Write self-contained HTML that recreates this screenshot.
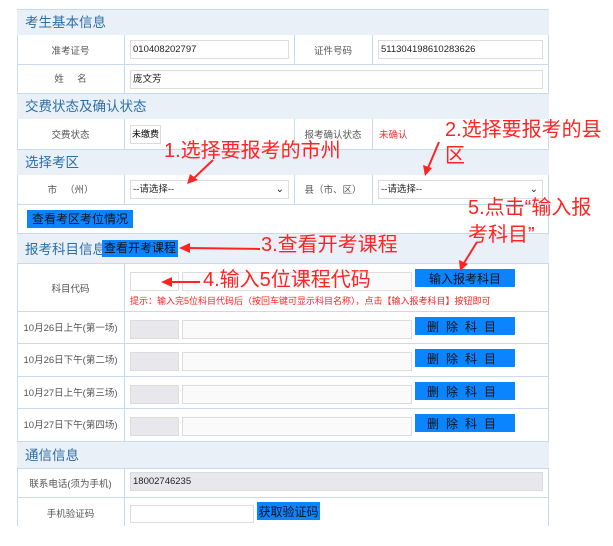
<!DOCTYPE html>
<html><head><meta charset="utf-8"><style>
*{margin:0;padding:0;box-sizing:border-box}
body{width:613px;height:546px;background:#fff;position:relative;overflow:hidden;font-family:"Liberation Sans","Noto Sans CJK SC",sans-serif}
.a{position:absolute}
.hd{position:absolute;left:17px;width:532px;background:#e9f0f8;border-top:1px solid #c9daee;color:#2d6ea6;font-size:13.5px;padding-left:8px}
.ln{position:absolute;background:#c9daee}
.lb{position:absolute;font-size:9.5px;color:#555;text-align:center;white-space:nowrap}
.in{position:absolute;border:1px solid #dcdcdc;background:#fff;font-size:9.5px;color:#222;padding-left:2px;white-space:nowrap;overflow:hidden}
.gr{background:#e8e8ec}
.bt{position:absolute;background:#0a84ff;color:#111;font-size:12px;text-align:center;white-space:nowrap}
.r{position:absolute;color:#ff2424;font-size:20px;white-space:nowrap;line-height:1}
</style></head><body>
<div class="ln" style="left:17px;top:9px;width:1px;height:517px"></div>
<div class="ln" style="left:548px;top:9px;width:1px;height:517px"></div>
<div class="ln" style="left:17px;top:9px;width:532px;height:1px"></div>
<div class="hd" style="top:9px;height:26px;line-height:26px">考生基本信息</div>
<div class="hd" style="top:93px;height:26px;line-height:26px">交费状态及确认状态</div>
<div class="hd" style="top:149px;height:26px;line-height:26px">选择考区</div>
<div class="hd" style="top:233px;height:30px;line-height:32px">报考科目信息</div>
<div class="hd" style="top:441px;height:27px;line-height:27px">通信信息</div>
<div class="ln" style="left:17px;top:64px;width:532px;height:1px"></div>
<div class="ln" style="left:17px;top:204px;width:532px;height:1px"></div>
<div class="ln" style="left:17px;top:263px;width:532px;height:1px"></div>
<div class="ln" style="left:17px;top:311px;width:532px;height:1px"></div>
<div class="ln" style="left:17px;top:343px;width:532px;height:1px"></div>
<div class="ln" style="left:17px;top:376px;width:532px;height:1px"></div>
<div class="ln" style="left:17px;top:408px;width:532px;height:1px"></div>
<div class="ln" style="left:17px;top:468px;width:532px;height:1px"></div>
<div class="ln" style="left:17px;top:497px;width:532px;height:1px"></div>
<div class="ln" style="left:124px;top:35px;width:1px;height:58px"></div>
<div class="ln" style="left:124px;top:119px;width:1px;height:30px"></div>
<div class="ln" style="left:124px;top:175px;width:1px;height:29px"></div>
<div class="ln" style="left:124px;top:263px;width:1px;height:178px"></div>
<div class="ln" style="left:124px;top:468px;width:1px;height:58px"></div>
<div class="ln" style="left:294px;top:35px;width:1px;height:29px"></div>
<div class="ln" style="left:372px;top:35px;width:1px;height:29px"></div>
<div class="ln" style="left:294px;top:119px;width:1px;height:30px"></div>
<div class="ln" style="left:372px;top:119px;width:1px;height:30px"></div>
<div class="ln" style="left:294px;top:175px;width:1px;height:29px"></div>
<div class="ln" style="left:372px;top:175px;width:1px;height:29px"></div>

<div class="lb" style="left:17px;width:107px;top:43px">准考证号</div>
<div class="in" style="left:130px;top:40px;width:159px;height:19px;line-height:17px">010408202797</div>
<div class="lb" style="left:294px;width:78px;top:43px">证件号码</div>
<div class="in" style="left:378px;top:40px;width:165px;height:19px;line-height:17px">511304198610283626</div>
<div class="lb" style="left:17px;width:107px;top:71px">姓&nbsp;&nbsp;&nbsp;&nbsp;&nbsp;名</div>
<div class="in" style="left:130px;top:70px;width:413px;height:19px;line-height:17px">庞文芳</div>

<div class="lb" style="left:17px;width:107px;top:127px">交费状态</div>
<div class="in" style="left:130px;top:125px;width:31px;height:19px;line-height:17px;color:#000;font-size:9px;padding-left:1px">未缴费</div>
<div class="lb" style="left:294px;width:78px;top:127px">报考确认状态</div>
<div class="a" style="left:379px;top:127px;font-size:9.5px;color:#e33">未确认</div>

<div class="lb" style="left:17px;width:107px;top:182px">市&nbsp;&nbsp;&nbsp;（州）</div>
<div class="in" style="left:130px;top:180px;width:159px;height:19px;line-height:17px">--请选择--<span style="position:absolute;right:4px;top:0;font-size:10px">⌄</span></div>
<div class="lb" style="left:294px;width:78px;top:182px">县（市、区）</div>
<div class="in" style="left:378px;top:180px;width:165px;height:19px;line-height:17px">--请选择--<span style="position:absolute;right:4px;top:0;font-size:10px">⌄</span></div>

<div class="bt" style="left:27px;top:210px;width:106px;height:18px;line-height:18px">查看考区考位情况</div>
<div class="bt" style="left:102px;top:240px;width:76px;height:17px;line-height:17px">查看开考课程</div>

<div class="lb" style="left:17px;width:107px;top:281px">科目代码</div>
<div class="in" style="left:130px;top:272px;width:49px;height:19px"></div>
<div class="in" style="left:182px;top:272px;width:230px;height:19px;background:#fafafa"></div>
<div class="bt" style="left:415px;top:269px;width:100px;height:18px;line-height:20px">输入报考科目</div>
<div class="a" style="left:130px;top:294px;font-size:9px;color:#f22;white-space:nowrap">提示：输入完5位科目代码后（按回车键可显示科目名称），点击【输入报考科目】按钮即可</div>

<div class="lb" style="left:17px;width:107px;top:320px">10月26日上午(第一场)</div>
<div class="lb" style="left:17px;width:107px;top:352px">10月26日下午(第二场)</div>
<div class="lb" style="left:17px;width:107px;top:385px">10月27日上午(第三场)</div>
<div class="lb" style="left:17px;width:107px;top:417px">10月27日下午(第四场)</div>
<div class="in gr" style="left:130px;top:320px;width:49px;height:19px"></div>
<div class="in" style="left:182px;top:320px;width:230px;height:19px;background:#fafafa"></div>
<div class="bt" style="left:415px;top:317px;width:100px;height:18px;line-height:20px;letter-spacing:7px">删除科目</div>
<div class="in gr" style="left:130px;top:352px;width:49px;height:19px"></div>
<div class="in" style="left:182px;top:352px;width:230px;height:19px;background:#fafafa"></div>
<div class="bt" style="left:415px;top:349px;width:100px;height:18px;line-height:20px;letter-spacing:7px">删除科目</div>
<div class="in gr" style="left:130px;top:385px;width:49px;height:19px"></div>
<div class="in" style="left:182px;top:385px;width:230px;height:19px;background:#fafafa"></div>
<div class="bt" style="left:415px;top:382px;width:100px;height:18px;line-height:20px;letter-spacing:7px">删除科目</div>
<div class="in gr" style="left:130px;top:417px;width:49px;height:19px"></div>
<div class="in" style="left:182px;top:417px;width:230px;height:19px;background:#fafafa"></div>
<div class="bt" style="left:415px;top:414px;width:100px;height:18px;line-height:20px;letter-spacing:7px">删除科目</div>

<div class="lb" style="left:17px;width:107px;top:476px">联系电话(须为手机)</div>
<div class="in gr" style="left:130px;top:472px;width:413px;height:19px;line-height:17px">18002746235</div>
<div class="lb" style="left:17px;width:107px;top:506px">手机验证码</div>
<div class="in" style="left:130px;top:505px;width:124px;height:18px"></div>
<div class="bt" style="left:257px;top:502px;width:63px;height:18px;line-height:20px">获取验证码</div>

<div class="r" style="left:164px;top:141px">1.选择要报考的市州</div>
<div class="r" style="left:445px;top:120px">2.选择要报考的县</div>
<div class="r" style="left:445px;top:146px">区</div>
<div class="r" style="left:468px;top:198px">5.点击“输入报</div>
<div class="r" style="left:468px;top:225px">考科目”</div>
<div class="r" style="left:261px;top:235px">3.查看开考课程</div>
<div class="r" style="left:203px;top:270px">4.输入5位课程代码</div>
<svg class="a" style="left:0;top:0" width="613" height="546">
<g stroke="#ff2424" stroke-width="2" fill="#ff2424">
<line x1="213" y1="160" x2="193" y2="179"/><polygon points="187,184 190,174 198,180" stroke="none"/>
<line x1="439" y1="142" x2="428" y2="168"/><polygon points="425,176 423,165 432,168" stroke="none"/>
<line x1="477" y1="242" x2="464" y2="263"/><polygon points="460,271 459,260 468,264" stroke="none"/>
<line x1="260" y1="249" x2="188" y2="248"/><polygon points="179,248 190,243 190,253" stroke="none"/>
<line x1="200" y1="282" x2="170" y2="282"/><polygon points="161,282 172,277 172,287" stroke="none"/>
</g></svg>
</body></html>
